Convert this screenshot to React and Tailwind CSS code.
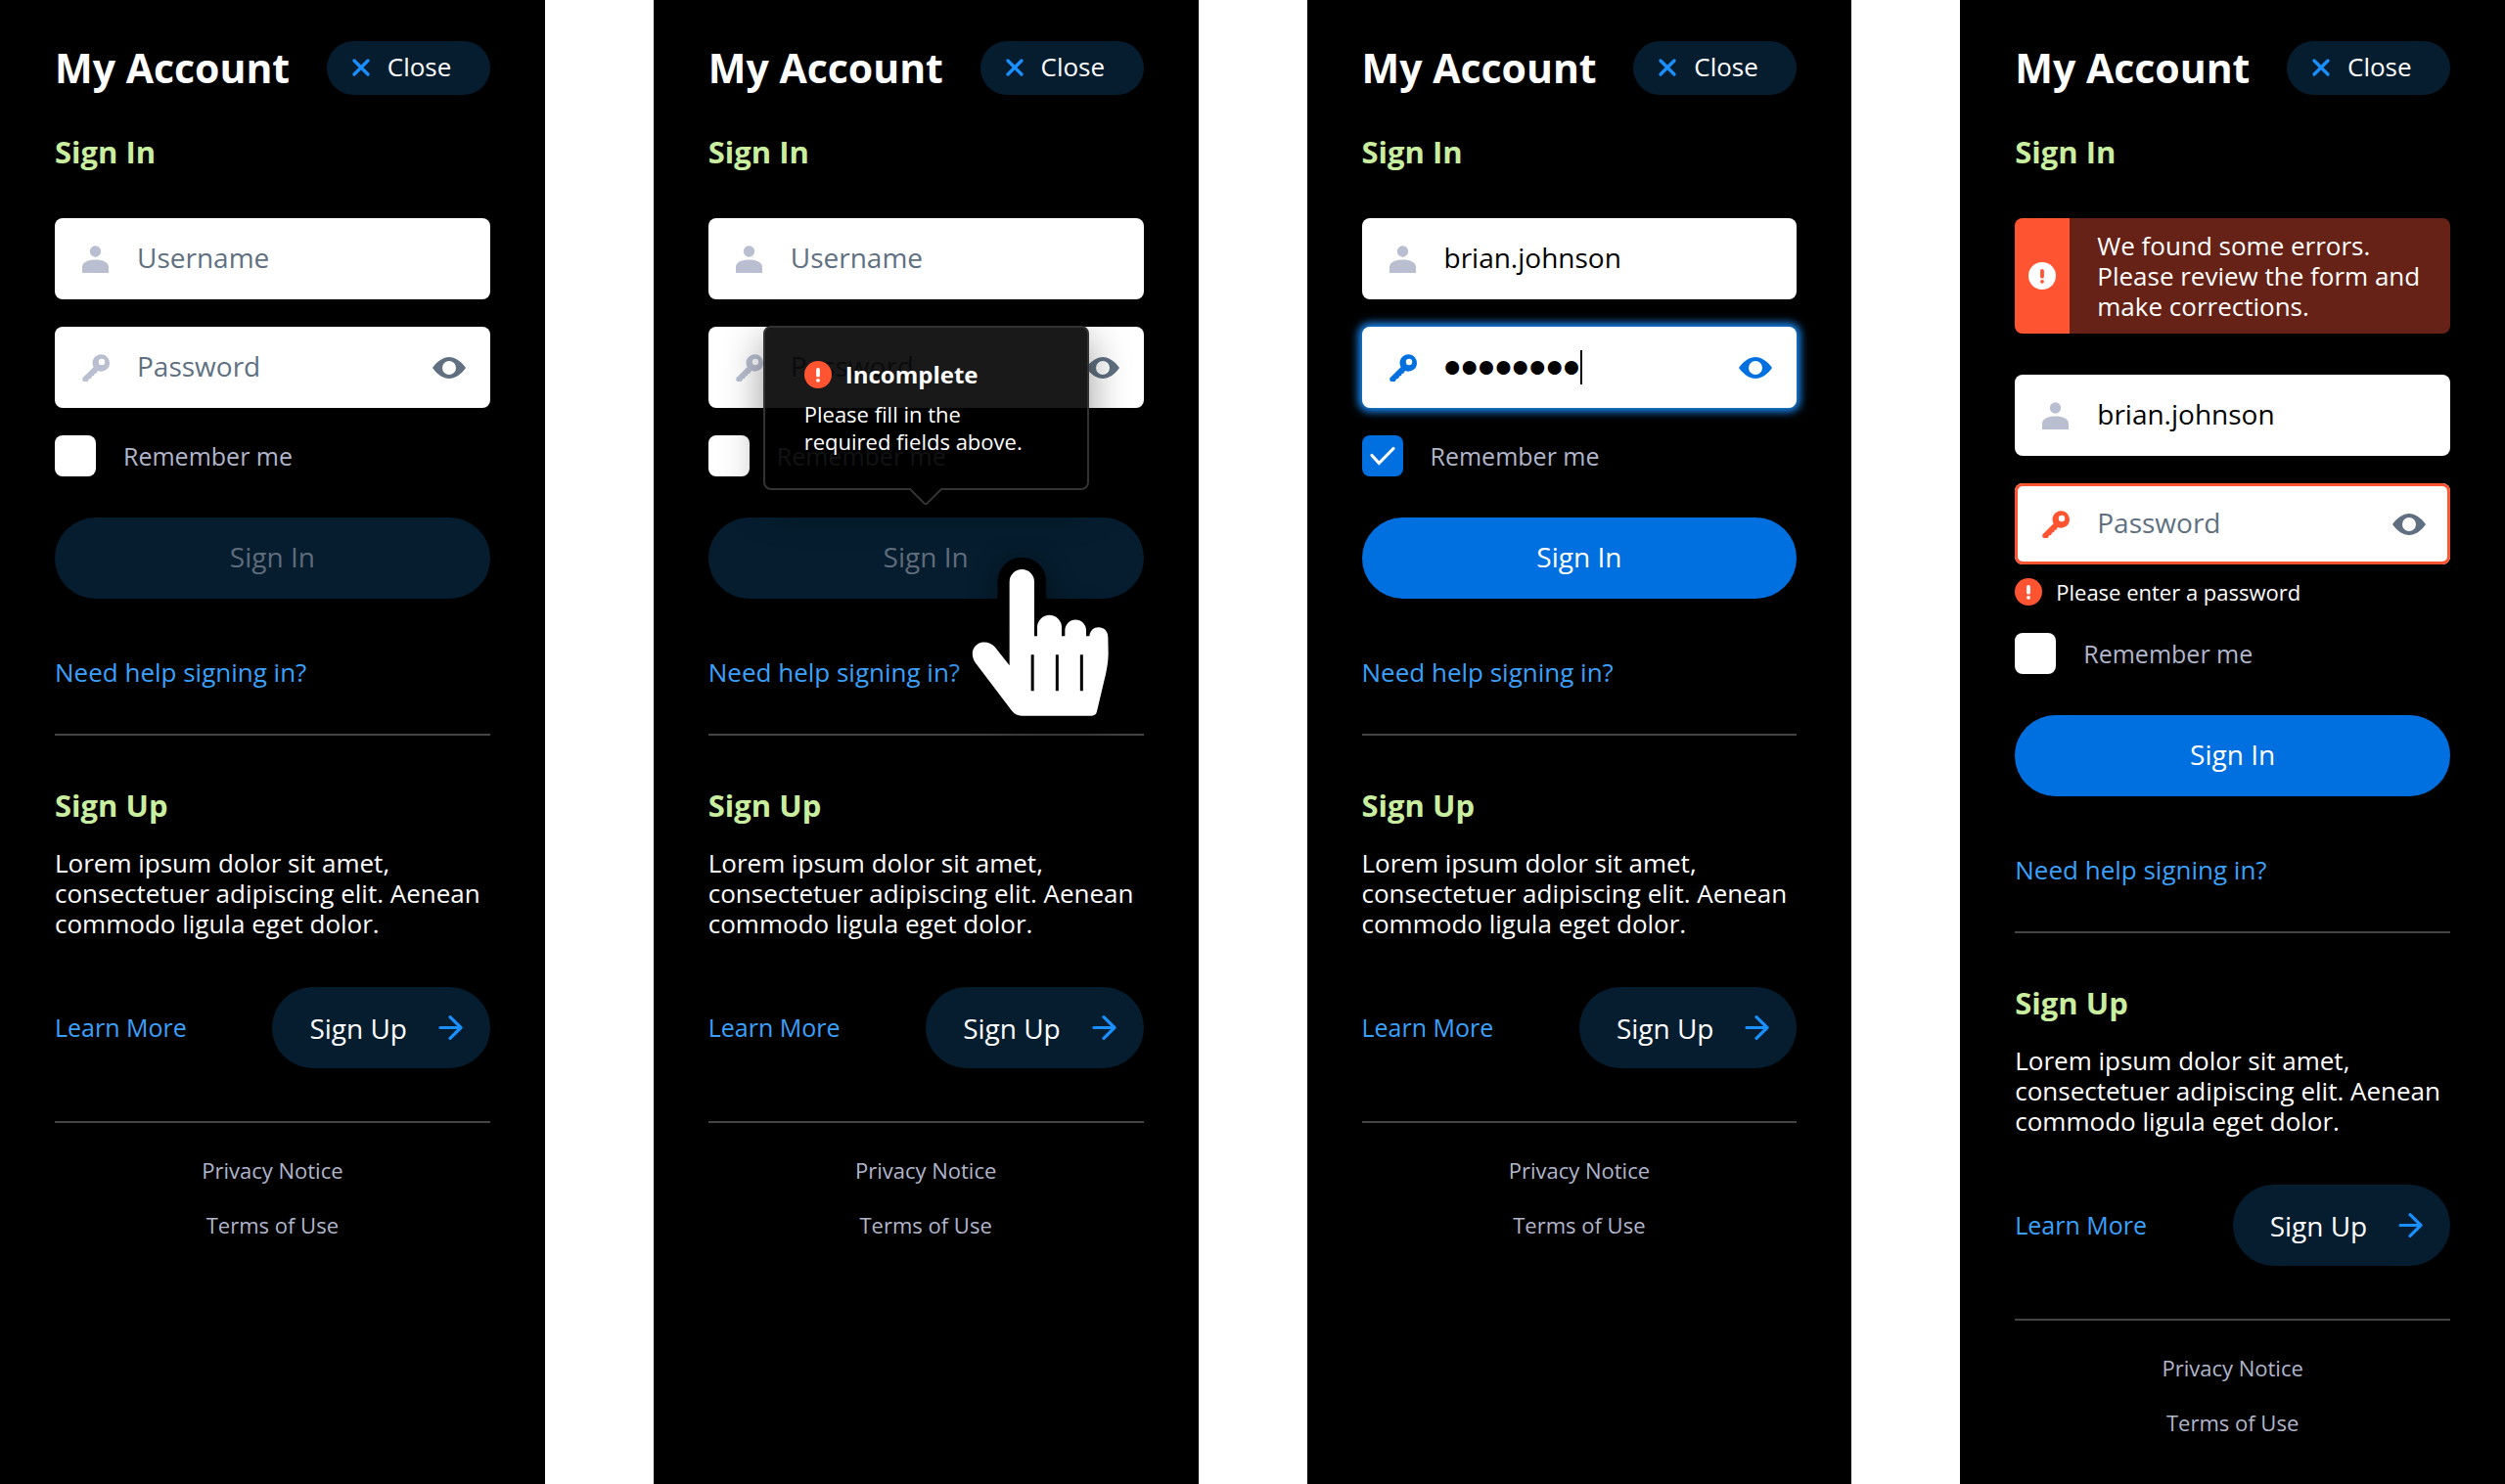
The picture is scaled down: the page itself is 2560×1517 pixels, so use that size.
import React, { useState } from 'react';
import clsx from 'clsx';

const UserIcon = () => (
    <svg className="w-7 h-7 shrink-0 text-[#b9bfd1]" viewBox="0 0 28 28" fill="currentColor" aria-hidden="true">
        <circle cx="13.5" cy="6" r="5.7" />
        <path d="M0 28v-6c0-5 6-7.5 13.5-7.5S27 17 27 22v6z" />
    </svg>
);

const KeyIcon = ({ className }) => (
    <svg className={clsx('w-7 h-7 shrink-0', className)} viewBox="0 0 28 28" fill="currentColor" aria-hidden="true">
        <path
            fillRule="evenodd"
            d="M19.3 .3a8.7 8.7 0 1 1-3.2 16.8l-1.1 1.1-.6 1.6-1.9.3-.3 1.9-2 .4-.4 1.2-1 1.5-2 .5-.6 2-1 .4H2.1C.8 28 .3 27.3.3 26.3v-1.8L11.6 13.2A8.7 8.7 0 0 1 19.3.3zM20 4.8a3.2 3.2 0 1 0 0 6.4 3.2 3.2 0 0 0 0-6.4z"
        />
    </svg>
);

const EyeIcon = () => (
    <svg className="w-[34px] h-[22px]" viewBox="0 0 34 22" fill="currentColor" aria-hidden="true">
        <path
            fillRule="evenodd"
            d="M0 11C5 4 11 0 17 0s12 4 17 11c-5 7-11 11-17 11S5 18 0 11zm17-7a7 7 0 1 0 0 14 7 7 0 0 0 0-14z"
        />
    </svg>
);

const AlertIcon = ({ className, mark }) => (
    <svg className={clsx('w-7 h-7 shrink-0', className)} viewBox="0 0 28 28" aria-hidden="true">
        <circle cx="14" cy="14" r="14" fill="currentColor" />
        <rect x="12.1" y="7" width="3.8" height="9.6" rx="1.9" fill={mark} />
        <circle cx="14" cy="19.8" r="1.9" fill={mark} />
    </svg>
);

const CloseIcon = () => (
    <svg className="w-[18px] h-[18px] shrink-0" viewBox="0 0 18 18" fill="none" stroke="#1a90ff" strokeWidth="3.2" strokeLinecap="round" aria-hidden="true">
        <path d="M2 2l14 14M16 2L2 16" />
    </svg>
);

const ArrowIcon = () => (
    <svg className="w-[25px] h-[25px] shrink-0" viewBox="0 0 25 25" fill="none" stroke="#1a90ff" strokeWidth="3.2" strokeLinecap="round" strokeLinejoin="round" aria-hidden="true">
        <path d="M2 12.5h21M12 1.7l11 10.8-11 10.8" />
    </svg>
);

const HAND =
    'M184 106A38 38 0 0 1 260 106V273H269V246A37.5 37.5 0 0 1 344 246V273H354V255A32.5 32.5 0 0 1 419 255V273H429C431 256 442 246 457 246C474 246 485 257 486 274L487 325C487 345 484 365 480 385L452 504Q449 517 436 517H220Q204 517 192 503L80 355C64 333 69 307 88 296C106 287 126 292 139 306L184 363Z';

const HandPointer = () => (
    <svg
        className="absolute top-[37px] right-[25px] w-[167px] h-[177px] overflow-visible pointer-events-none drop-shadow-[0_4px_14px_rgba(0,0,0,0.4)]"
        viewBox="20 20 501 531"
        aria-hidden="true"
    >
        <path d={HAND} fill="#000" stroke="#000" strokeWidth="73" strokeLinejoin="round" />
        <path d={HAND} fill="#fff" />
        <path d="M254.500 330V441M330 330V441M405 330V441" stroke="#000" strokeWidth="9" />
    </svg>
);

const Tooltip = () => (
    <div
        role="tooltip"
        className="absolute inset-x-14 bottom-full mb-7 rounded-lg border-2 border-[#333] bg-black/90 px-10 py-[34px] text-white shadow-[0_14px_42px_rgba(0,0,0,0.4)]"
    >
        <div className="flex items-center gap-3.5">
            <AlertIcon className="text-[#ff5432]" mark="#fff" />
            <strong className="text-[24px] leading-7 font-bold">Incomplete</strong>
        </div>
        <p className="mt-3 text-[22px] leading-7">Please fill in the required fields above.</p>
        <svg className="absolute top-full left-1/2 -translate-x-1/2 w-9 h-[18px]" viewBox="0 0 36 18" fill="none" aria-hidden="true">
            <path d="M1 -2V0L16.500 15.500Q18 17 19.500 15.500L35 0V-2Z" fill="#000" />
            <path d="M1 0L16.500 15.500Q18 17 19.500 15.500L35 0" stroke="#333" strokeWidth="2" />
        </svg>
    </div>
);

const fieldBox = 'flex items-center h-[83px] rounded-lg bg-white pl-7';
const fieldInput = 'min-w-0 bg-transparent pb-1 text-black placeholder:text-[#607081] placeholder:opacity-100 outline-none';

function PasswordField({ id, defaultValue, focused, invalid }) {
    const [visible, setVisible] = useState(false);

    return (
        <div
            className={clsx(
                fieldBox,
                'mt-7 pr-[25px]',
                focused && 'shadow-[0_0_8px_4px_#1a88f2]',
                invalid && 'shadow-[inset_0_0_0_3px_#ff5432]'
            )}
        >
            <label htmlFor={id} className="mr-7">
                <KeyIcon className={focused ? 'text-[#0070e0]' : invalid ? 'text-[#ff5432]' : 'text-[#b9bfd1]'} />
            </label>
            <div className="flex flex-1 min-w-0 items-center">
                <input
                    id={id}
                    type={visible ? 'text' : 'password'}
                    aria-label="Password"
                    placeholder="Password"
                    defaultValue={defaultValue}
                    className={clsx(
                        fieldInput,
                        focused
                            ? 'field-sizing-content font-[Lato,sans-serif] font-black text-[30px] caret-transparent'
                            : 'w-full text-[28px] font-medium'
                    )}
                />
                {/* Text caret */}
                {focused && <span className="w-[2px] h-[35px] bg-black" />}
            </div>
            <button
                type="button"
                aria-label="Show password"
                onClick={() => setVisible(!visible)}
                className={focused ? 'text-[#0070e0]' : 'text-[#607081]'}
            >
                <EyeIcon />
            </button>
        </div>
    );
}

function AccountPanel({ id, username, password, focused, remember, disabled, tooltip, error }) {
    return (
        <section className="min-h-screen bg-black px-14 pt-[42px] pb-10 text-white">
            <header className="flex items-center justify-between">
                <h1 className="text-[41px] leading-[55px] font-bold whitespace-nowrap">My Account</h1>
                <button type="button" className="flex items-center gap-[18px] w-[167px] h-[55px] shrink-0 rounded-full bg-[#051d2f] pl-[26px] pb-0.5 text-[26px] font-medium">
                    <CloseIcon />
                    Close
                </button>
            </header>

            <h2 className="mt-[38px] text-[31px] leading-10 font-bold text-[#c9eea0]">Sign In</h2>

            <form className="mt-12" onSubmit={(e) => e.preventDefault()}>
                {error && (
                    <div role="alert" className="mb-[42px] flex h-[118px] overflow-hidden rounded-lg bg-[#662216]">
                        <div className="flex w-14 shrink-0 items-center justify-center bg-[#ff5432]">
                            <AlertIcon className="text-white" mark="#ff5432" />
                        </div>
                        <p className="self-center pl-7 pr-6 text-[26px] leading-[31px]">
                            We found some errors. Please review the form and make corrections.
                        </p>
                    </div>
                )}

                <div className={clsx(fieldBox, 'pr-7')}>
                    <label htmlFor={`${id}-username`} className="mr-7">
                        <UserIcon />
                    </label>
                    <input
                        id={`${id}-username`}
                        type="text"
                        aria-label="Username"
                        placeholder="Username"
                        defaultValue={username}
                        className={clsx(fieldInput, 'flex-1 text-[28px] font-medium')}
                    />
                </div>

                <PasswordField id={`${id}-password`} defaultValue={password} focused={focused} invalid={error} />

                {error && (
                    <p className="mt-3.5 flex items-center gap-3.5 text-[22px] leading-7">
                        <AlertIcon className="text-[#ff5432]" mark="#fff" />
                        Please enter a password
                    </p>
                )}

                <div className="mt-7 flex items-center">
                    <div className="relative w-[42px] h-[42px]">
                        <input
                            id={`${id}-remember`}
                            type="checkbox"
                            defaultChecked={remember}
                            className="peer block w-full h-full appearance-none rounded-lg bg-white checked:bg-[#0070e0]"
                        />
                        <svg className="absolute inset-0 hidden peer-checked:block pointer-events-none" viewBox="0 0 42 42" fill="none" stroke="#fff" strokeWidth="3.2" strokeLinecap="round" aria-hidden="true">
                            <path d="M10 20.500l7.300 8L32 13.500" />
                        </svg>
                    </div>
                    <label htmlFor={`${id}-remember`} className="pl-7 text-[25px] leading-[31px] text-[#b1b6cb]">
                        Remember me
                    </label>
                </div>

                <div className="relative mt-[42px]">
                    <button
                        type="submit"
                        disabled={disabled}
                        className="block w-full h-[83px] rounded-full bg-[#0070e0] pb-1 text-[28px] font-medium disabled:bg-[#051d2f] disabled:text-[#5f6b7b]"
                    >
                        Sign In
                    </button>
                    {tooltip && (
                        <>
                            <Tooltip />
                            <HandPointer />
                        </>
                    )}
                </div>
            </form>

            <p className="mt-[60px] text-[26px] leading-[31px]">
                <a href="#help" className="text-[#3ba0fb]">Need help signing in?</a>
            </p>
            <hr className="mt-[47px] border-t-2 border-[#444]" />

            <h2 className="mt-[51px] text-[31px] leading-10 font-bold text-[#c9eea0]">Sign Up</h2>
            <p className="mt-6 text-[26px] leading-[31px]">
                Lorem ipsum dolor sit amet, consectetuer adipiscing elit. Aenean commodo ligula eget dolor.
            </p>
            <div className="mt-[49px] flex items-center justify-between">
                <a href="#learn" className="text-[25px] text-[#3ba0fb]">Learn More</a>
                <button type="button" className="flex w-1/2 h-[83px] items-center justify-between rounded-full bg-[#051d2f] pl-[38px] pr-7 text-[28px] font-medium">
                    Sign Up
                    <ArrowIcon />
                </button>
            </div>
            <hr className="mt-[54px] border-t-2 border-[#444]" />

            <nav className="mt-[34px] flex flex-col items-center gap-7 text-[22px] leading-7 text-[#b1b6cb]">
                <a href="#privacy">Privacy Notice</a>
                <a href="#terms">Terms of Use</a>
            </nav>
        </section>
    );
}

export default function App() {
    return (
        <main className="grid grid-cols-4 gap-x-[111px] bg-white font-['Open_Sans',sans-serif]">
            <AccountPanel id="empty" disabled />
            <AccountPanel id="incomplete" disabled tooltip />
            <AccountPanel id="filled" username="brian.johnson" password="password" focused remember />
            <AccountPanel id="error" username="brian.johnson" error />
        </main>
    );
}
